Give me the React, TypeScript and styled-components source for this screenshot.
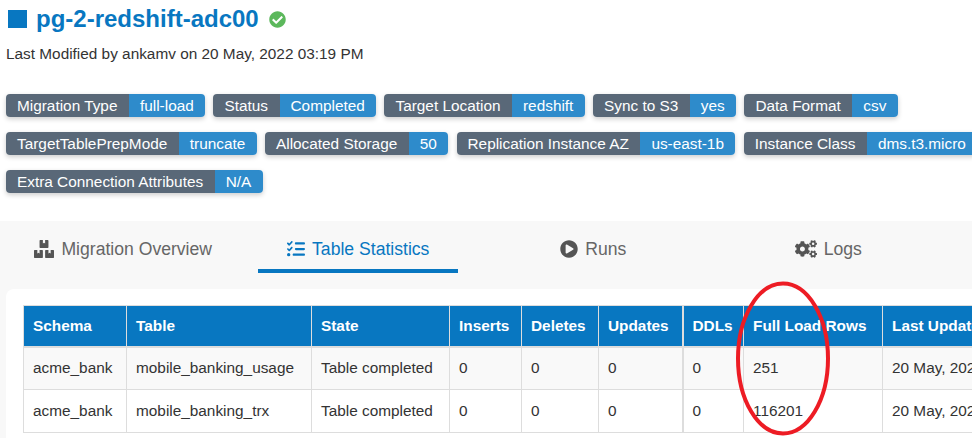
import * as React from 'react';
import styled, { createGlobalStyle } from 'styled-components';
import { FaBoxes, FaCheckCircle, FaCogs, FaPlayCircle } from 'react-icons/fa';
import { FaListCheck } from 'react-icons/fa6';

const GlobalStyle = createGlobalStyle`
    html, body {
        margin: 0;
        padding: 0;
        width: 972px;
        height: 438px;
        overflow: hidden;
        background: #fff;
    }
    body {
        font-family: "Liberation Sans", Arial, sans-serif;
        color: #333;
    }
`;

const Page = styled.div`
    position: relative;
    width: 1000px;
    height: 438px;
    overflow: hidden;
`;

const Header = styled.div`
    padding: 6px 0 0 8px;
`;

const TitleRow = styled.div`
    display: flex;
    align-items: center;
    height: 26px;
    color: #0877c1;
`;

const TitleSquare = styled.span`
    width: 19px;
    height: 18px;
    background: #0877c1;
    margin-right: 9px;
`;

const Title = styled.h1`
    margin: 0;
    font-size: 24px;
    line-height: 26px;
    font-weight: 700;
`;

const StatusIcon = styled(FaCheckCircle)`
    width: 17px;
    height: 17px;
    color: #5cb85c;
    margin-left: 10px;
`;

const Modified = styled.div`
    margin: 13px 0 0 -2px;
    font-size: 15.36px;
    line-height: 17px;
    color: #333;
`;

const BadgeList = styled.div`
    display: flex;
    flex-wrap: wrap;
    gap: 15px 8.2px;
    width: 990px;
    margin: 32px 0 0 6px;
`;

const Badge = styled.div`
    display: flex;
    height: 23px;
    border-radius: 4px;
    overflow: hidden;
    box-shadow: 0 2px 5px rgba(0, 0, 0, 0.2);
    font-size: 15.36px;
    line-height: 23px;
    color: #fff;
`;

const BadgeKey = styled.span`
    padding: 0 11.5px 0 11px;
    background: #596878;
    white-space: nowrap;
`;

const BadgeValue = styled.span`
    padding: 0 11.5px 0 11px;
    background: #2e8bcb;
    white-space: nowrap;
`;

const Panel = styled.div`
    margin-top: 28px;
    padding-left: 6px;
    background: #f8f8f8;
`;

const TabBar = styled.div`
    display: flex;
    height: 68px;
    margin-left: -1px;
`;

const Tab = styled.div`
    width: 235px;
    display: flex;
    justify-content: center;
`;

const TabInner = styled.div<{ $active?: boolean; $iconWidth: number }>`
    width: 200px;
    height: 52px;
    display: flex;
    align-items: center;
    justify-content: center;
    gap: 7px;
    padding: 8px 0 0 1.5px;
    box-sizing: border-box;
    font-size: 17.6px;
    color: ${p => (p.$active ? '#0877c1' : '#666')};
    border-bottom: 4px solid ${p => (p.$active ? '#0877c1' : 'transparent')};
    svg {
        width: ${p => p.$iconWidth}px;
        height: 18px;
        color: ${p => (p.$active ? '#0877c1' : '#555')};
    }
`;

const Card = styled.div`
    height: 149px;
    padding: 16px 0 0 17px;
    background: #fff;
    border-radius: 8px 0 0 0;
    box-sizing: border-box;
`;

const StatsTable = styled.table`
    border-collapse: collapse;
    table-layout: fixed;
    width: 1060px;
    font-size: 15.36px;
`;

const HeadCell = styled.th`
    height: 41px;
    padding: 0 9px;
    box-sizing: border-box;
    background: #0877c1;
    color: #fff;
    font-weight: 700;
    text-align: left;
    white-space: nowrap;
    overflow: hidden;
    border: 1px solid #ddd;
    border-bottom-width: 2px;
    &:nth-child(7) {
        border-left-width: 2px;
    }
`;

const BodyRow = styled.tr<{ $striped?: boolean }>`
    background: ${p => (p.$striped ? '#f9f9f9' : '#fff')};
`;

const BodyCell = styled.td`
    height: 43px;
    padding: 0 9px;
    box-sizing: border-box;
    color: #333;
    white-space: nowrap;
    overflow: hidden;
    border: 1px solid #ddd;
    &:nth-child(7) {
        border-left-width: 2px;
    }
`;

const Annotation = styled.svg`
    position: absolute;
    left: 734px;
    top: 280px;
    width: 98px;
    height: 158px;
    pointer-events: none;
`;

const badges = [
    ['Migration Type', 'full-load'],
    ['Status', 'Completed'],
    ['Target Location', 'redshift'],
    ['Sync to S3', 'yes'],
    ['Data Format', 'csv'],
    ['TargetTablePrepMode', 'truncate'],
    ['Allocated Storage', '50'],
    ['Replication Instance AZ', 'us-east-1b'],
    ['Instance Class', 'dms.t3.micro'],
    ['Extra Connection Attributes', 'N/A'],
];

const columns: [string, number][] = [
    ['Schema', 103],
    ['Table', 185],
    ['State', 138],
    ['Inserts', 72],
    ['Deletes', 77],
    ['Updates', 84],
    ['DDLs', 61],
    ['Full Load Rows', 139],
    ['Last Updated', 201],
];

const rows = [
    ['acme_bank', 'mobile_banking_usage', 'Table completed', '0', '0', '0', '0', '251', '20 May, 2022 03:19 PM'],
    ['acme_bank', 'mobile_banking_trx', 'Table completed', '0', '0', '0', '0', '116201', '20 May, 2022 03:19 PM'],
];

const tabs = [
    { label: 'Migration Overview', icon: <FaBoxes />, iconWidth: 20 },
    { label: 'Table Statistics', icon: <FaListCheck />, iconWidth: 18, active: true },
    { label: 'Runs', icon: <FaPlayCircle />, iconWidth: 18 },
    { label: 'Logs', icon: <FaCogs />, iconWidth: 22 },
];

export default function App() {
    return (
        <Page>
            <GlobalStyle />
            <Header>
                <TitleRow>
                    <TitleSquare />
                    <Title>pg-2-redshift-adc00</Title>
                    <StatusIcon />
                </TitleRow>
                <Modified>Last Modified by ankamv on 20 May, 2022 03:19 PM</Modified>
            </Header>
            <BadgeList>
                {badges.map(([key, value]) => (
                    <Badge key={key}>
                        <BadgeKey>{key}</BadgeKey>
                        <BadgeValue>{value}</BadgeValue>
                    </Badge>
                ))}
            </BadgeList>
            <Panel>
                <TabBar>
                    {tabs.map(tab => (
                        <Tab key={tab.label}>
                            <TabInner $active={tab.active} $iconWidth={tab.iconWidth}>
                                {tab.icon}
                                {tab.label}
                            </TabInner>
                        </Tab>
                    ))}
                </TabBar>
                <Card>
                    <StatsTable>
                        <colgroup>
                            {columns.map(([name, width]) => (
                                <col key={name} width={width} />
                            ))}
                        </colgroup>
                        <thead>
                            <tr>
                                {columns.map(([name]) => (
                                    <HeadCell key={name}>{name}</HeadCell>
                                ))}
                            </tr>
                        </thead>
                        <tbody>
                            {rows.map((row, i) => (
                                <BodyRow key={i} $striped={i === 0}>
                                    {row.map((cell, j) => (
                                        <BodyCell key={j}>{cell}</BodyCell>
                                    ))}
                                </BodyRow>
                            ))}
                        </tbody>
                    </StatsTable>
                </Card>
            </Panel>
            <Annotation viewBox="0 0 98 158">
                <ellipse cx="49" cy="78.5" rx="45" ry="75" fill="none" stroke="#ed1c24" strokeWidth="4" />
            </Annotation>
        </Page>
    );
}
